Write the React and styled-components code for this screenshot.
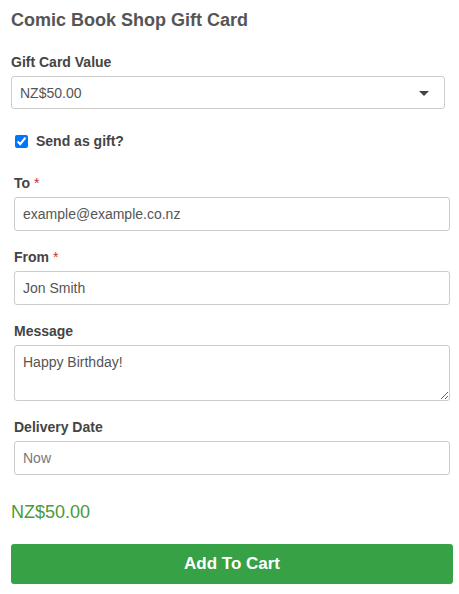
import React from "react";
import styled, { createGlobalStyle } from "styled-components";

const Global = createGlobalStyle`
  html, body { margin: 0; padding: 0; background: #fff; }
  body { font-family: "Liberation Sans", Arial, sans-serif; color: #555; }
  * { box-sizing: border-box; }
`;

const Page = styled.div`
  padding: 8px 6px 10px 11px;
  width: 459px;
`;

const Title = styled.h1`
  margin: 0;
  font-size: 18px;
  line-height: 24px;
  font-weight: bold;
  color: #555;
`;

const Field = styled.div`
  display: flex;
  flex-direction: column;
  margin-top: ${(p) => p.$top || 17}px;
`;

const Label = styled.label`
  font-size: 14px;
  line-height: 18px;
  font-weight: bold;
  color: #444;
  margin-bottom: 5px;
`;

const Req = styled.span`
  color: #c9302c;
  font-weight: normal;
  margin-left: 4px;
`;

const SelectWrap = styled.div`
  position: relative;
  width: 434px;
`;

const Select = styled.select`
  appearance: none;
  width: 100%;
  height: 33px;
  border: 1px solid #ccc;
  border-radius: 3px;
  background: #fff;
  padding: 0 8px;
  font-family: "Liberation Sans", Arial, sans-serif;
  font-size: 14px;
  color: #555;
  outline: none;
`;

const Arrow = styled.svg`
  position: absolute;
  right: 16px;
  top: 15px;
  pointer-events: none;
`;

const CheckRow = styled.div`
  display: flex;
  align-items: center;
  gap: 8px;
  margin-top: 23px;
  margin-left: 4px;
  height: 18px;
`;

const Check = styled.input`
  margin: 0;
  width: 13px;
  height: 13px;
  accent-color: #0075ff;
`;

const CheckLabel = styled.label`
  font-size: 14px;
  font-weight: bold;
  color: #444;
`;

const Gift = styled.div`
  margin-left: 3px;
  width: 436px;
  display: flex;
  flex-direction: column;
`;

const Input = styled.input`
  width: 100%;
  height: 34px;
  border: 1px solid #ccc;
  border-radius: 3px;
  padding: 0 8px;
  font-family: "Liberation Sans", Arial, sans-serif;
  font-size: 14px;
  color: #555;
  outline: none;
  &::placeholder { color: #777; }
`;

const TextArea = styled.textarea`
  width: 100%;
  height: 56px;
  border: 1px solid #ccc;
  border-radius: 3px;
  padding: 7px 8px;
  font-family: "Liberation Sans", Arial, sans-serif;
  font-size: 14px;
  line-height: 18px;
  color: #555;
  outline: none;
  resize: vertical;
  display: block;
`;

const Price = styled.div`
  margin-top: 25px;
  font-size: 18px;
  line-height: 24px;
  color: #4b9a3b;
`;

const Button = styled.button`
  margin-top: 20px;
  width: 442px;
  height: 40px;
  border: none;
  border-radius: 3px;
  background: #37a145;
  color: #fff;
  font-family: "Liberation Sans", Arial, sans-serif;
  font-size: 17px;
  font-weight: bold;
  cursor: pointer;
`;

export default function App() {
  return (
    <>
      <Global />
      <Page>
        <Title>Comic Book Shop Gift Card</Title>
        <Field $top={21}>
          <Label htmlFor="value">Gift Card Value</Label>
          <SelectWrap>
            <Select id="value" defaultValue="50">
              <option value="50">NZ$50.00</option>
            </Select>
            <Arrow width="10" height="5" viewBox="0 0 10 5">
              <path d="M0 0 H10 L5 5 Z" fill="#444" />
            </Arrow>
          </SelectWrap>
        </Field>
        <CheckRow>
          <Check type="checkbox" id="gift" defaultChecked />
          <CheckLabel htmlFor="gift">Send as gift?</CheckLabel>
        </CheckRow>
        <Gift>
          <Field $top={24}>
            <Label htmlFor="to">
              To<Req>*</Req>
            </Label>
            <Input id="to" defaultValue="example@example.co.nz" />
          </Field>
          <Field>
            <Label htmlFor="from">
              From<Req>*</Req>
            </Label>
            <Input id="from" defaultValue="Jon Smith" />
          </Field>
          <Field>
            <Label htmlFor="msg">Message</Label>
            <TextArea id="msg" defaultValue="Happy Birthday!" />
          </Field>
          <Field>
            <Label htmlFor="date">Delivery Date</Label>
            <Input id="date" placeholder="Now" />
          </Field>
        </Gift>
        <Price>NZ$50.00</Price>
        <Button>Add To Cart</Button>
      </Page>
    </>
  );
}
